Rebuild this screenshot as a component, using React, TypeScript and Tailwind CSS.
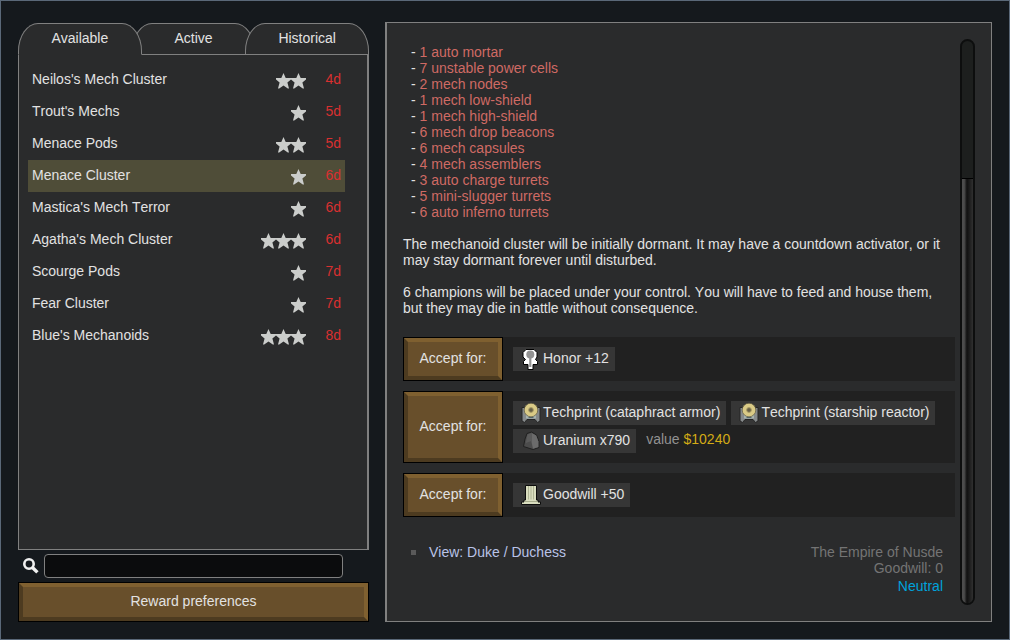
import React, { useState } from 'react';

interface Quest {
  name: string;
  stars: number;
  days: string;
}

const tabs = ['Available', 'Active', 'Historical'];

const quests: Quest[] = [
  { name: "Neilos's Mech Cluster", stars: 2, days: '4d' },
  { name: "Trout's Mechs", stars: 1, days: '5d' },
  { name: 'Menace Pods', stars: 2, days: '5d' },
  { name: 'Menace Cluster', stars: 1, days: '6d' },
  { name: "Mastica's Mech Terror", stars: 1, days: '6d' },
  { name: "Agatha's Mech Cluster", stars: 3, days: '6d' },
  { name: 'Scourge Pods', stars: 1, days: '7d' },
  { name: 'Fear Cluster', stars: 1, days: '7d' },
  { name: "Blue's Mechanoids", stars: 3, days: '8d' },
];

const threats = [
  '1 auto mortar',
  '7 unstable power cells',
  '2 mech nodes',
  '1 mech low-shield',
  '1 mech high-shield',
  '6 mech drop beacons',
  '6 mech capsules',
  '4 mech assemblers',
  '3 auto charge turrets',
  '5 mini-slugger turrets',
  '6 auto inferno turrets',
];

const StarIcon = () => (
  <svg width="15" height="16" viewBox="0 0 15 16" className="shrink-0" fill="#cbcdcb" aria-hidden="true">
    <path d="M7.5 0 9.7 5H15V6.6L11.4 9.4 13 15.4H11.8L7.5 12.4 3.2 15.4H2L3.6 9.4 0 6.6V5H5.3Z" />
  </svg>
);

const SearchIcon = () => (
  <svg width="16" height="16" viewBox="0 0 16 16" fill="none" stroke="#f0f0f0" aria-hidden="true">
    <circle cx="6" cy="6" r="4.7" strokeWidth="2.6" />
    <path d="M9.2 9.2 14.4 14.4" strokeWidth="3.4" />
  </svg>
);

const HonorIcon = () => (
  <svg width="18" height="22" viewBox="0 0 18 22" aria-hidden="true">
    <path
      d="M5 1.5H13L16 4.5V9L14.5 11.5 16.5 13.5V16.5H12V21.5H7V16.5H2.5V13.5L4.5 11.5 2 9V4.5Z"
      fill="#fff"
      stroke="#000"
    />
    <circle cx="9.3" cy="6.5" r="4" fill="#929292" />
    <path d="M8.2 9H10.4V19H8.2Z" fill="#929292" />
  </svg>
);

const TechprintIcon = () => (
  <svg width="20" height="22" viewBox="0 0 20 22" aria-hidden="true">
    <path d="M1 5.5H19V19L16.5 20.5 14 17.5H6L3.5 20.5 1 19Z" fill="#868a8b" stroke="#242424" />
    <path d="M5 11H15V16.5H5Z" fill="#a7b3ae" />
    <path d="M7.5 15.5H12.5" stroke="#52676a" />
    <circle cx="10" cy="8" r="6.8" fill="#d9ca86" stroke="#5b563f" strokeWidth="0.7" />
    <circle cx="10" cy="8" r="2.4" fill="#665f46" stroke="#aa9d66" />
  </svg>
);

const UraniumIcon = () => (
  <svg width="20" height="22" viewBox="0 0 18 22" aria-hidden="true">
    <path d="M5 3.5 9.5 2 14.5 5 17 11.5V17.5L11 19.5 1.5 16.5 3 9Z" fill="#4c4c4c" stroke="#202020" />
    <path d="M9.5 3 14.2 5.6 16.4 11.5V17L11 18.8 9.5 12Z" fill="#6b6b6b" />
    <path d="M5.5 4.5 9 3.2 9.3 11 3.8 13Z" fill="#5b5b5b" />
  </svg>
);

const GoodwillIcon = () => (
  <svg width="20" height="22" viewBox="0 0 20 22" aria-hidden="true">
    <path d="M4.5 1.5H15.5V16H17V18H19.5V20.5H.5V18H3V16H4.5Z" fill="#d9ddbf" stroke="#0c0c0c" />
    <path d="M7.5 2V15.5M10 2V15.5M12.5 2V15.5" stroke="#aeb393" />
    <path d="M3.5 17.5H16.5" stroke="#a6ab8b" />
  </svg>
);

interface BevelButtonProps {
  className: string;
  children: React.ReactNode;
}

const BevelButton: React.FC<BevelButtonProps> = ({ className, children }) => (
  <button
    type="button"
    className={`m-px border-4 border-t-[#7f6030] border-r-[#7f6030] border-b-[#4d3b20] border-l-[#4d3b20] bg-[#684f2b] pb-0.5 ring-1 ring-black hover:bg-[#745930] ${className}`}
  >
    {children}
  </button>
);

interface RewardProps {
  icon: React.ReactNode;
  label: string;
}

const Reward: React.FC<RewardProps> = ({ icon, label }) => (
  <div className="flex h-6 items-center bg-[#363636] pr-1.5 pl-2">
    <span className="flex w-[22px] items-center">{icon}</span>
    <span className="pb-0.5">{label}</span>
  </div>
);

const RewardOption: React.FC<{ children: React.ReactNode }> = ({ children }) => (
  <div className="flex bg-[#212121]">
    <BevelButton className="w-[98px] shrink-0">Accept for:</BevelButton>
    <div className="flex flex-1 flex-wrap gap-x-[5px] gap-y-1 p-2.5">{children}</div>
  </div>
);

const App: React.FC = () => {
  const [tab, setTab] = useState('Available');
  const [selected, setSelected] = useState('Menace Cluster');

  return (
    <main className="flex min-h-screen gap-4 border border-[#5a6878] bg-[#15191d] pt-[21px] pr-[17px] pb-[17px] pl-[17px] font-['Liberation_Sans',Arial,sans-serif] text-sm leading-4 text-[#e2e2e2] [font-kerning:none]">
      <section className="flex w-[351px] shrink-0 flex-col pt-px">
        <div role="tablist" className="relative flex">
          {tabs.map((name) => (
            <button
              key={name}
              type="button"
              role="tab"
              aria-selected={tab === name}
              onClick={() => setTab(name)}
              className={`-ml-2.5 h-8 flex-1 rounded-[20px_20px_0_0/28px_28px_0_0] border border-[#808080] bg-[#2a2b2c] pb-[3px] first:ml-0 ${
                tab === name ? 'z-10 border-b-transparent' : name === 'Active' ? '' : 'z-[5]'
              }`}
            >
              {name}
            </button>
          ))}
        </div>
        <div className="flex-1 border-r-2 border-b border-l border-[#808080] bg-[#2a2b2c] pt-[9px] pr-[22px] pl-[9px]">
          <ul>
            {quests.map((quest) => (
              <li key={quest.name}>
                <button
                  type="button"
                  onClick={() => setSelected(quest.name)}
                  className={`flex h-8 w-full items-center px-1 text-left ${
                    selected === quest.name ? 'bg-[#4f4d38]' : ''
                  }`}
                >
                  <span className="flex-1 pb-0.5">{quest.name}</span>
                  <span className="flex pt-0.5">
                    {Array.from({ length: quest.stars }, (_, i) => (
                      <StarIcon key={i} />
                    ))}
                  </span>
                  <span className="w-[35px] pb-0.5 text-right text-[#d93030]">{quest.days}</span>
                </button>
              </li>
            ))}
          </ul>
        </div>
        <div className="flex items-center py-1 pl-[5px]">
          <label htmlFor="quest-search" className="w-[21px]">
            <SearchIcon />
          </label>
          <input
            id="quest-search"
            type="text"
            aria-label="Search quests"
            className="mr-[26px] h-6 min-w-0 flex-1 rounded border border-[#808080] bg-[#0b0c0d] px-2 outline-none"
          />
        </div>
        <BevelButton className="h-[38px]">Reward preferences</BevelButton>
      </section>

      <section className="flex flex-1 border border-l-2 border-[#808080] bg-[#2a2b2c] pt-4 pr-4 pb-4 pl-4">
        <div className="flex flex-1 flex-col pt-[5px]">
          <ul className="pl-2">
            {threats.map((threat) => (
              <li key={threat}>
                - <span className="text-[#cf6a64]">{threat}</span>
              </li>
            ))}
          </ul>
          <p className="mt-4 pr-1">
            The mechanoid cluster will be initially dormant. It may have a countdown activator, or it may stay dormant
            forever until disturbed.
          </p>
          <p className="mt-4 pr-1">
            6 champions will be placed under your control. You will have to feed and house them, but they may die in
            battle without consequence.
          </p>

          <div className="mt-[21px] flex flex-col gap-2.5">
            <RewardOption>
              <Reward icon={<HonorIcon />} label="Honor +12" />
            </RewardOption>
            <RewardOption>
              <Reward icon={<TechprintIcon />} label="Techprint (cataphract armor)" />
              <Reward icon={<TechprintIcon />} label="Techprint (starship reactor)" />
              <Reward icon={<UraniumIcon />} label="Uranium x790" />
              <p className="pt-0.5 pl-[5px] text-[#929292]">
                value <span className="text-[#d3ab16]">$10240</span>
              </p>
            </RewardOption>
            <RewardOption>
              <Reward icon={<GoodwillIcon />} label="Goodwill +50" />
            </RewardOption>
          </div>

          <div className="mt-[27px] flex items-start justify-between pr-3 pl-2">
            <a href="#titles" className="flex items-center gap-[13px] text-[#b9c3e8]">
              <span className="size-[5px] bg-[#5a5a5a]" />
              View: Duke / Duchess
            </a>
            <div className="text-right text-[#747474]">
              <p>The Empire of Nusde</p>
              <p>Goodwill: 0</p>
              <p className="mt-0.5 text-[#00a2dc]">Neutral</p>
            </div>
          </div>
        </div>

        {/* scroll bar */}
        <div className="ml-[5px] flex w-[15px] flex-col rounded-full border-2 border-[#0d0e0e] bg-[#1d1f1e] pt-[137px]">
          <div className="flex-1 rounded-t-sm rounded-b-full border-t border-black bg-linear-to-r from-[#4c4c4c] from-20% via-[#101010] via-45% to-[#303030]" />
        </div>
      </section>
    </main>
  );
};

export default App;
